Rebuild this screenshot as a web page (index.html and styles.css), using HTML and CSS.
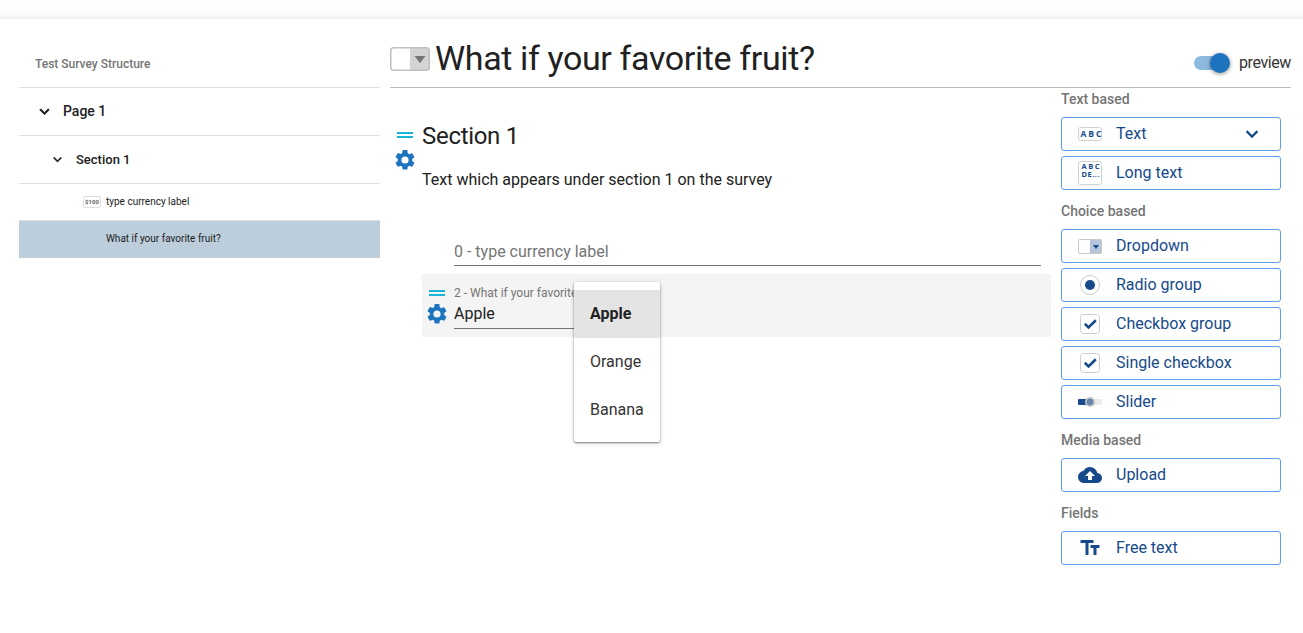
FILE: index.html
```html
<!DOCTYPE html>
<html lang="en">
<head>
<meta charset="utf-8">
<title>Test Survey</title>
<link rel="stylesheet" href="styles.css">
</head>
<body>
<svg class="symbols" aria-hidden="true">
  <symbol id="gear" viewBox="0 0 24 24"><path d="M19.14 12.94c.04-.3.06-.61.06-.94s-.02-.64-.07-.94l2.03-1.58a.49.49 0 0 0 .12-.61l-1.92-3.32a.49.49 0 0 0-.59-.22l-2.39.96a7 7 0 0 0-1.62-.94l-.36-2.54A.48.48 0 0 0 13.92 2h-3.84c-.24 0-.43.17-.47.41l-.36 2.54c-.59.24-1.13.57-1.62.94l-2.39-.96a.48.48 0 0 0-.59.22L2.74 8.87a.47.47 0 0 0 .12.61l2.03 1.58c-.05.3-.09.63-.09.94s.02.64.07.94l-2.03 1.58a.49.49 0 0 0-.12.61l1.92 3.32c.12.22.37.29.59.22l2.39-.96c.5.38 1.03.7 1.62.94l.36 2.54c.05.24.24.41.48.41h3.84c.24 0 .44-.17.47-.41l.36-2.54a7 7 0 0 0 1.62-.94l2.39.96c.22.08.47 0 .59-.22l1.92-3.32a.47.47 0 0 0-.12-.61zM12 15.6A3.6 3.6 0 1 1 12 8.4a3.6 3.6 0 0 1 0 7.2z"/></symbol>
  <symbol id="chevron" viewBox="0 0 24 24"><path d="M7.41 8.59 12 13.17l4.59-4.58L18 10l-6 6-6-6z"/></symbol>
  <symbol id="check" viewBox="0 0 20 20"><rect x=".5" y=".5" width="19" height="19" rx="3" fill="#fff" stroke="#ccc"/><path d="M4.8 9.8l3.7 3.6 7.3-7.2" fill="none" stroke="#164a8b" stroke-width="2.6"/></symbol>
</svg>
<div class="topbar"></div>
<div class="page">
  <nav class="tree">
    <div class="tree-head">Test Survey Structure</div>
    <div class="tree-row tree-page"><svg class="chev"><use href="#chevron"/></svg><span class="tree-name">Page 1</span></div>
    <div class="tree-row tree-section"><svg class="chev"><use href="#chevron"/></svg>Section 1</div>
    <div class="tree-item"><span class="currency">$100</span><span class="tree-name">type currency label</span></div>
    <div class="tree-item selected"><span class="tree-name">What if your favorite fruit?</span></div>
  </nav>
  <main class="main">
    <header class="header">
      <svg class="title-icon" viewBox="0 0 40 24"><rect x=".75" y=".75" width="38.5" height="22.5" rx="3" fill="#fff"/><path d="M20 1h16a3 3 0 0 1 3 3v16a3 3 0 0 1-3 3H20z" fill="#d4d4d4"/><rect x=".75" y=".75" width="38.5" height="22.5" rx="3" fill="none" stroke="#bfbfbf" stroke-width="1.5"/><path d="M24.5 9h11L30 16z" fill="#757575"/></svg>
      <h1 class="title">What if your favorite fruit?</h1>
      <div class="toggle"><span class="track"><span class="thumb"></span></span><span class="toggle-label">preview</span></div>
    </header>
    <div class="body">
      <section class="survey">
        <div class="section-top">
          <div class="handles"><span class="drag"></span><svg class="gear"><use href="#gear"/></svg></div>
          <div>
            <h2 class="section-title">Section 1</h2>
            <p class="section-text">Text which appears under section 1 on the survey</p>
          </div>
        </div>
        <div class="field-empty">0 - type currency label</div>
        <div class="question">
          <div class="handles"><span class="drag"></span><svg class="gear"><use href="#gear"/></svg></div>
          <div class="field">
            <div class="field-label">2 - What if your favorite fruit?</div>
            <div class="field-value">Apple</div>
          </div>
          <div class="menu">
            <div class="option active">Apple</div>
            <div class="option">Orange</div>
            <div class="option">Banana</div>
          </div>
        </div>
      </section>
      <aside class="palette">
        <h3 class="group">Text based</h3>
        <div class="tool"><span class="icon"><svg width="24" height="15"><rect x=".5" y=".5" width="23" height="13" rx="2" fill="#fff" stroke="#d0d0d0"/><text x="2.5" y="10.3" font-size="8.5" textLength="21">ABC</text></svg></span><span class="tool-name">Text</span><svg class="expand"><use href="#chevron"/></svg></div>
        <div class="tool"><span class="icon"><svg width="24" height="24"><rect x=".5" y=".5" width="23" height="23" rx="2" fill="#fff" stroke="#d0d0d0"/><text font-size="7.5"><tspan x="3.6" y="8.4" textLength="18">ABC</tspan><tspan x="3.6" y="15.5" textLength="18">DE...</tspan></text></svg></span><span class="tool-name">Long text</span></div>
        <h3 class="group">Choice based</h3>
        <div class="tool"><span class="icon"><svg width="24" height="15"><path d="M12 0h10a2 2 0 0 1 2 2v11a2 2 0 0 1-2 2H12z" fill="#b5c5da"/><rect x=".5" y=".5" width="23" height="14" rx="1.5" fill="none" stroke="#c8c8c8"/><path d="M15 6h6l-3 4z" fill="#164a8b"/></svg></span><span class="tool-name">Dropdown</span></div>
        <div class="tool"><span class="icon"><svg width="20" height="20"><circle cx="10" cy="10" r="9.5" fill="#fff" stroke="#ccc"/><circle cx="10" cy="10" r="5" fill="#164a8b"/></svg></span><span class="tool-name">Radio group</span></div>
        <div class="tool"><span class="icon"><svg width="20" height="20"><use href="#check"/></svg></span><span class="tool-name">Checkbox group</span></div>
        <div class="tool"><span class="icon"><svg width="20" height="20"><use href="#check"/></svg></span><span class="tool-name">Single checkbox</span></div>
        <div class="tool"><span class="icon"><svg width="24" height="10"><rect y="2" width="12" height="6" rx="1" fill="#164a8b"/><rect x="12" y="2" width="12" height="6" rx="1" fill="#ebebeb"/><circle cx="12" cy="5" r="5" fill="#c4c4c4"/><circle cx="12" cy="5" r="3.3" fill="#6685ad"/></svg></span><span class="tool-name">Slider</span></div>
        <h3 class="group">Media based</h3>
        <div class="tool"><span class="icon"><svg width="24" height="24" viewBox="0 0 24 24"><path fill="#164a8b" d="M19.35 10.04A7.49 7.49 0 0 0 12 4C9.11 4 6.6 5.64 5.35 8.04A5.994 5.994 0 0 0 0 14c0 3.31 2.69 6 6 6h13c2.76 0 5-2.24 5-5 0-2.64-2.05-4.78-4.65-4.96zM14 13v4h-4v-4H7l5-5 5 5z"/></svg></span><span class="tool-name">Upload</span></div>
        <h3 class="group">Fields</h3>
        <div class="tool"><span class="icon"><svg width="24" height="24" viewBox="0 0 24 24"><path fill="#164a8b" d="M2.5 4h13v3h-5v12h-3V7h-5zM21.5 9h-9v3h3v7h3v-7h3z"/></svg></span><span class="tool-name">Free text</span></div>
      </aside>
    </div>
  </main>
</div>
</body>
</html>
```
FILE: styles.css
```css
* { box-sizing: border-box; }
body { margin: 0; background: #fff; color: #212121; font-family: Roboto, "Liberation Sans", sans-serif; overflow: hidden; }
h1, h2, h3, p { margin: 0; font-weight: 400; }
.symbols { position: absolute; width: 0; height: 0; }
.topbar { height: 19px; background: linear-gradient(#fff, #fcfcfc 60%, #f8f8f8 85%, #efefef); }
.page { display: flex; gap: 10px; padding: 0 12px 0 19px; }

.tree { width: 361px; flex: none; }
.tree-head { height: 69px; padding: 20px 16px 0; border-bottom: 1px solid #e0e0e0; color: #757575; font-size: 12px; font-weight: 500; line-height: 50px; }
.tree-row { display: flex; align-items: center; height: 48px; border-bottom: 1px solid #e0e0e0; font-weight: 500; }
.tree-page { padding-left: 16px; font-size: 14px; gap: 9px; }
.tree-section { padding-left: 30px; font-size: 13px; gap: 10px; }
.tree-name { padding-bottom: 2px; }
.chev { width: 19px; height: 19px; fill: #212121; stroke: #212121; stroke-width: 1; }
.tree-section .chev { width: 17px; height: 17px; stroke-width: .4; }
.tree-item { display: flex; align-items: center; justify-content: flex-start; height: 37px; padding-left: 64px; gap: 5px; border-bottom: 1px solid #e0e0e0; font-size: 10px; }
.tree-item.selected { padding-left: 87px; background: #bccddc; border-color: #c4ccd4; }
.currency { width: 18px; height: 12px; border: 1px solid #dedede; border-radius: 2px; color: #666; font-size: 6px; font-weight: 700; line-height: 10px; text-align: center; }

.main { flex: 1; }
.header { display: flex; align-items: center; height: 69px; padding-top: 11px; border-bottom: 1px solid #bdbdbd; }
.title-icon { width: 40px; height: 24px; margin-right: 5px; }
.title { flex: 1; padding-bottom: 2px; font-size: 34px; line-height: 40px; letter-spacing: -.37px; }
.toggle { display: flex; align-items: center; gap: 8px; padding-top: 8px; font-size: 16px; color: #333; }
.track { width: 36px; height: 14px; border-radius: 7px; background: linear-gradient(90deg, #8eb9df 34px, transparent 34px); }
.thumb { display: block; width: 20px; height: 20px; margin: -3px 0 0 16px; border-radius: 50%; background: #1e73be; box-shadow: 0 1px 4px rgba(0, 0, 0, .45); }
.toggle-label { margin-left: 1px; letter-spacing: -.4px; }
.body { display: flex; gap: 10px; }

.survey { width: 661px; padding-top: 32px; }
.section-top { display: flex; height: 114px; }
.handles { display: flex; flex-direction: column; align-items: center; width: 30px; margin-right: 2px; }
.drag { width: 16px; height: 6px; margin-top: 12px; border: solid #19b5d8; border-width: 2px 0; }
.gear { width: 24px; height: 24px; margin-top: 10px; fill: #1e73be; }
.section-title { font-size: 24px; line-height: 32px; letter-spacing: -.3px; }
.section-text { margin-top: 16px; font-size: 16px; line-height: 24px; }
.field-empty { height: 32px; margin: 0 10px 0 64px; border-bottom: 1px solid #757575; color: #757575; font-size: 16px; line-height: 35px; }
.question { position: relative; display: flex; height: 63px; margin: 8px 0 0 32px; background: #f4f4f4; }
.question .drag { margin-top: 16px; }
.question .gear { margin-top: 6px; }
.field { width: 180px; padding-top: 10px; white-space: nowrap; }
.field-label { color: #757575; font-size: 12px; line-height: 18px; }
.field-value { height: 27px; border-bottom: 1px solid #757575; font-size: 16px; line-height: 23px; }
.menu { position: absolute; left: 152px; top: 8px; width: 86px; height: 160px; padding-top: 8px; border-radius: 2px; background: #fff; box-shadow: 0 1px 2px rgba(0, 0, 0, .45), 0 1px 5px rgba(0, 0, 0, .15); }
.option { height: 48px; padding-left: 16px; color: #333; font-size: 16px; line-height: 48px; }
.option.active { background: #e4e4e4; font-weight: 700; color: #212121; }

.palette { width: 220px; }
.group { height: 29px; padding-top: 2px; color: #757575; font-size: 14px; font-weight: 500; line-height: 18px; }
.tool + .group { height: 34px; padding-top: 7px; }
.tool { display: flex; align-items: center; height: 34px; margin-bottom: 5px; padding: 0 16px; border: 1px solid #5b9eeb; border-radius: 3px; color: #164a8b; font-size: 16px; }
.tool-name { padding-bottom: 2px; }
.icon { display: flex; align-items: center; justify-content: center; width: 24px; height: 24px; margin-right: 14px; }
.icon text { fill: #164a8b; font-family: "Open Sans", sans-serif; font-weight: 700; }
.expand { width: 24px; height: 24px; margin-left: auto; fill: #164a8b; stroke: #164a8b; stroke-width: .4; }
```
